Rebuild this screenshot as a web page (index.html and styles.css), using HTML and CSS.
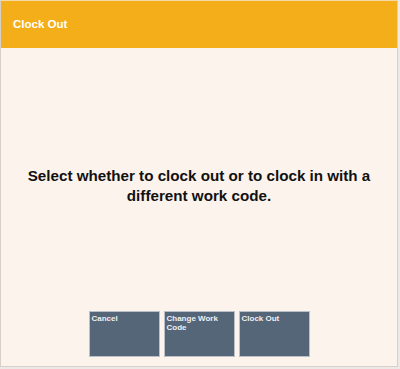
FILE: index.html
```
<!DOCTYPE html>
<html>
<head>
<meta charset="utf-8">
<link rel="stylesheet" href="styles.css">
</head>
<body>
<div class="frame">
  <div class="header">Clock Out</div>
  <div class="main">
    <p class="message">Select whether to clock out or to clock in with a different work code.</p>
  </div>
  <div class="actions">
    <div class="btn">Cancel</div>
    <div class="btn">Change Work Code</div>
    <div class="btn">Clock Out</div>
  </div>
</div>
</body>
</html>
```
FILE: styles.css
```
html, body {
  margin: 0;
  padding: 0;
  background: #ede9e6;
}
.frame {
  box-sizing: border-box;
  width: 398px;
  height: 367px;
  background: #fcf3ec;
  border-left: 1px solid #d6cfca;
  border-right: 1px solid #d6cfca;
  border-bottom: 1px solid #d6cfca;
  border-top: 1px solid #f5d9a8;
  display: flex;
  flex-direction: column;
  font-family: "Liberation Sans", Arial, sans-serif;
}
.header {
  height: 47px;
  background: #f4ae1a;
  color: #ffffff;
  font-weight: bold;
  font-size: 11.5px;
  display: flex;
  align-items: center;
  padding-left: 12px;
  padding-bottom: 2px;
  box-sizing: border-box;
}
.main {
  flex: 1;
  display: flex;
  align-items: center;
  justify-content: center;
  padding-top: 12px;
}
.message {
  margin: 0;
  width: 360px;
  text-align: center;
  font-weight: bold;
  font-size: 15.2px;
  line-height: 20px;
  color: #111111;
}
.actions {
  display: flex;
  justify-content: center;
  gap: 4px;
  padding-bottom: 9px;
  padding-left: 0;
}
.btn {
  box-sizing: border-box;
  width: 71px;
  height: 46px;
  background: #556679;
  border: 1px solid #b9c0c8;
  color: #eef0f3;
  font-weight: bold;
  font-size: 8px;
  line-height: 9px;
  padding: 2px 2px;
}
```
